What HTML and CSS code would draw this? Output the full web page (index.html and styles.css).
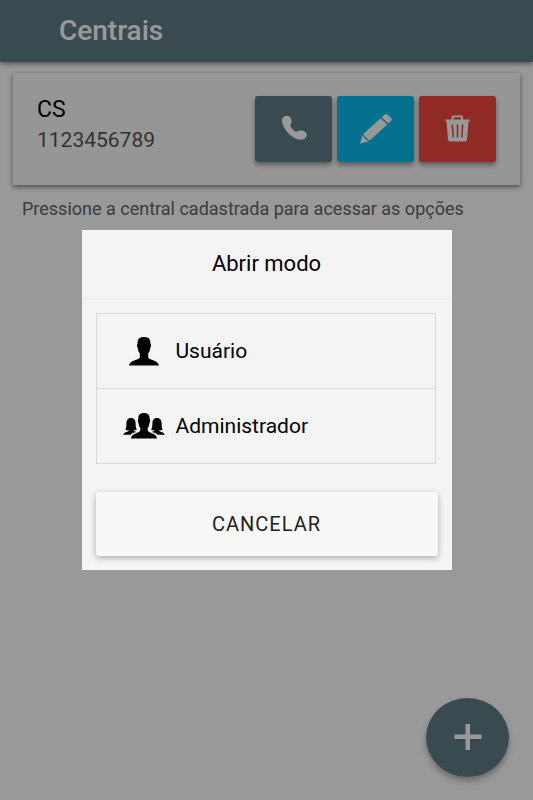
FILE: index.html
```html
<!DOCTYPE html>
<html lang="pt-BR">
<head>
  <meta charset="utf-8">
  <meta name="viewport" content="width=device-width, initial-scale=1">
  <title>Centrais</title>
  <link rel="stylesheet" href="styles.css">
</head>
<body>
  <header class="toolbar">
    <h1 class="toolbar-title">Centrais</h1>
  </header>

  <main class="content">
    <section class="card">
      <div class="card-text">
        <h2 class="card-name">CS</h2>
        <p class="card-number">1123456789</p>
      </div>
      <div class="card-actions">
        <button class="action action-call" type="button" aria-label="Ligar">
          <svg class="icon" viewBox="0 0 32 32" aria-hidden="true">
            <path d="M4.300 5.600C5.700 3.100 9.500 1.700 11.700 3.700C13.700 5.700 14.400 8.500 12.900 10.800C11.900 12.500 12.400 13.700 13.900 15.500C15.400 17.400 17 18.800 18.800 18.700C20.500 18 21.500 17.300 23.600 17.600C26.300 18 28.700 19.700 28.800 21.800C28.800 24.500 26.300 26.800 23.300 26.800C17.500 26.800 12 22.700 8.200 17.800C5.600 14.200 3.100 8.800 4.300 5.600Z"/>
          </svg>
        </button>
        <button class="action action-edit" type="button" aria-label="Editar">
          <svg class="icon" viewBox="0 0 32 32" aria-hidden="true">
            <path d="M21.700 4.200L24.500 1.700C25.500 0.800 26.700 0.800 27.700 1.700L31 4.800C32 5.800 32 6.900 31 7.900L28.400 10.500Z"/>
            <path d="M20.600 5.200L27.300 11.500L9.400 27.700L3 21.300Z"/>
            <path d="M2.400 22.500L8.300 28.400L0 30.600Z"/>
          </svg>
        </button>
        <button class="action action-delete" type="button" aria-label="Excluir">
          <svg class="icon" viewBox="0 0 32 32" aria-hidden="true">
            <path fill-rule="evenodd" d="M9.500 6.500V4.500Q9.500 2.500 11.500 2.500H19Q21 2.500 21 4.500V6.500H27.500V8.500H26.500L25 26Q24.800 28.500 23 28.500H8Q6.200 28.500 6 26L4.500 8.500H3.500V6.500ZM11.500 6.500H19V5.200Q19 4.300 18 4.300H12.500Q11.500 4.300 11.500 5.200ZM9.500 11.500L10.500 24.500H12L11.100 11.500ZM14.700 11.500V24.500H16.300V11.500ZM19.900 11.500L19 24.500H20.500L21.500 11.500Z"/>
          </svg>
        </button>
      </div>
    </section>
    <p class="hint">Pressione a central cadastrada para acessar as opções</p>
  </main>

  <button class="fab" type="button" aria-label="Adicionar central">
    <svg class="fab-icon" viewBox="0 0 28 28" aria-hidden="true">
      <path d="M11.500 0H16V10.500H27.500V15H16V26H11.500V15H0.500V10.500H11.500Z"/>
    </svg>
  </button>

  <div class="backdrop">
    <section class="modal" role="dialog" aria-modal="true" aria-labelledby="modal-title">
      <h2 class="modal-title" id="modal-title">Abrir modo</h2>
      <div class="modal-body">
        <ul class="options">
          <li class="option-item">
            <button class="option" type="button">
              <svg class="option-icon" viewBox="0 0 42 32" aria-hidden="true">
                <path d="M21 2C25.500 2 27.600 4 27.400 8.500C28.300 9.200 28.100 12 27.200 13.200C27 15.600 26.400 17 25.200 18.200V22.500C26.500 25.300 35 24.800 36 30.500H6C7 24.800 15.500 25.300 16.800 22.500V18.200C15.600 17 15 15.600 14.800 13.200C13.900 12 13.700 9.200 14.600 8.500C14.400 4 16.500 2 21 2Z"/>
              </svg>
              <span>Usuário</span>
            </button>
          </li>
          <li class="option-item">
            <button class="option" type="button">
              <svg class="option-icon" viewBox="0 0 42 32" aria-hidden="true">
                <path d="M21 3C25 3 27 5 26.600 9C27.500 9.700 27.300 12 26.400 13.200C26.200 15.400 25.800 16.600 24.700 17.700V20.500C25.700 23.500 33.300 22.700 34 28.500H8C8.700 22.700 16.300 23.500 17.300 20.500V17.700C16.200 16.600 15.800 15.400 15.600 13.200C14.700 12 14.500 9.700 15.400 9C15 5 17 3 21 3Z"/>
                <path d="M8 8C11.500 8 12.600 10.500 12.600 13.500C12.600 16 13 18.300 13.800 19.500C12.800 20.300 11 20.400 10.300 20.300C10.600 21.300 12 21.500 13 22C10.500 22.600 8.800 23.200 7.700 24.800H0.300C0.600 22 5.600 22.300 5.800 20.300C4.500 20.400 3.200 20.200 2.300 19.500C3.200 18.300 3.400 16 3.400 13.500C3.400 10.500 4.500 8 8 8Z"/>
                <path d="M34 8C37.500 8 38.600 10.500 38.600 13.500C38.600 16 38.800 18.300 39.700 19.500C38.800 20.200 37.500 20.400 36.200 20.300C36.400 22.300 41.400 22 41.700 24.800H34.300C33.200 23.200 31.500 22.600 29 22C30 21.500 31.400 21.300 31.700 20.300C31 20.400 29.200 20.300 28.200 19.500C29 18.300 29.400 16 29.400 13.500C29.400 10.500 30.500 8 34 8Z"/>
              </svg>
              <span>Administrador</span>
            </button>
          </li>
        </ul>
        <button class="cancel" type="button">CANCELAR</button>
      </div>
    </section>
  </div>
</body>
</html>
```
FILE: styles.css
```css
* {
  box-sizing: border-box;
}

body {
  margin: 0;
  min-height: 100vh;
  background: #fff;
  color: #000;
  font-family: Roboto, "Liberation Sans", sans-serif;
}

h1,
h2,
p,
ul {
  margin: 0;
  padding: 0;
}

button {
  border: 0;
  padding: 0;
  color: inherit;
  font: inherit;
  cursor: pointer;
}

.toolbar {
  display: flex;
  align-items: center;
  height: 62px;
  padding: 0 59px;
  background: #607d87;
  color: #fff;
  box-shadow: 0 2px 5px rgba(0, 0, 0, 0.45);
}

.toolbar-title {
  font-size: 28px;
  font-weight: 500;
  line-height: 32px;
}

.content {
  padding: 11px 13px;
}

.card {
  display: flex;
  justify-content: space-between;
  padding: 23px 24px;
  background: #fafafa;
  box-shadow: 0 2px 5px rgba(0, 0, 0, 0.5);
}

.card-name {
  font-size: 23px;
  font-weight: 400;
  line-height: 28px;
}

.card-number {
  padding-top: 2px;
  color: #555;
  font-size: 21px;
  line-height: 28px;
}

.card-actions {
  display: flex;
  gap: 5px;
}

.action {
  display: flex;
  align-items: center;
  justify-content: center;
  width: 77px;
  height: 66px;
  border-radius: 3px;
  color: #fff;
  box-shadow: 0 3px 5px rgba(0, 0, 0, 0.4);
}

.action-call {
  background: #607d87;
}

.action-edit {
  background: #07bfed;
}

.action-delete {
  background: #f0463c;
}

.icon {
  width: 32px;
  height: 32px;
  fill: currentColor;
}

.hint {
  padding: 13px 9px 0;
  color: #666;
  font-size: 18px;
  line-height: 22px;
}

.fab {
  position: fixed;
  right: 24px;
  bottom: 23px;
  display: flex;
  align-items: center;
  justify-content: center;
  width: 83px;
  height: 79px;
  border-radius: 50%;
  background: #607d87;
  color: #fff;
  box-shadow: 0 4px 6px rgba(0, 0, 0, 0.3);
}

.fab-icon {
  width: 28px;
  height: 28px;
  fill: currentColor;
}

.backdrop {
  position: fixed;
  inset: 0;
  display: flex;
  align-items: center;
  justify-content: center;
  background: rgba(0, 0, 0, 0.4);
}

.modal {
  width: 100%;
  max-width: 370px;
  background: #f4f4f4;
}

.modal-title {
  padding: 20px 16px;
  border-bottom: 1px solid #e9e9e9;
  font-size: 22px;
  font-weight: 400;
  line-height: 28px;
  text-align: center;
}

.modal-body {
  padding: 14px;
}

.options {
  margin-right: 2px;
  border: 1px solid #d8d8d8;
  list-style: none;
}

.option-item + .option-item {
  border-top: 1px solid #d8d8d8;
}

.option {
  display: flex;
  align-items: center;
  gap: 11px;
  width: 100%;
  height: 74px;
  padding: 0 26px;
  background: none;
  font-size: 21px;
  text-align: left;
}

.option-icon {
  width: 42px;
  height: 32px;
  fill: currentColor;
}

.cancel {
  display: block;
  width: 100%;
  height: 64px;
  margin-top: 28px;
  border-radius: 3px;
  background: #f8f8f8;
  color: #222;
  font-size: 20px;
  letter-spacing: 1px;
  box-shadow: 0 2px 6px rgba(0, 0, 0, 0.3);
}
```
